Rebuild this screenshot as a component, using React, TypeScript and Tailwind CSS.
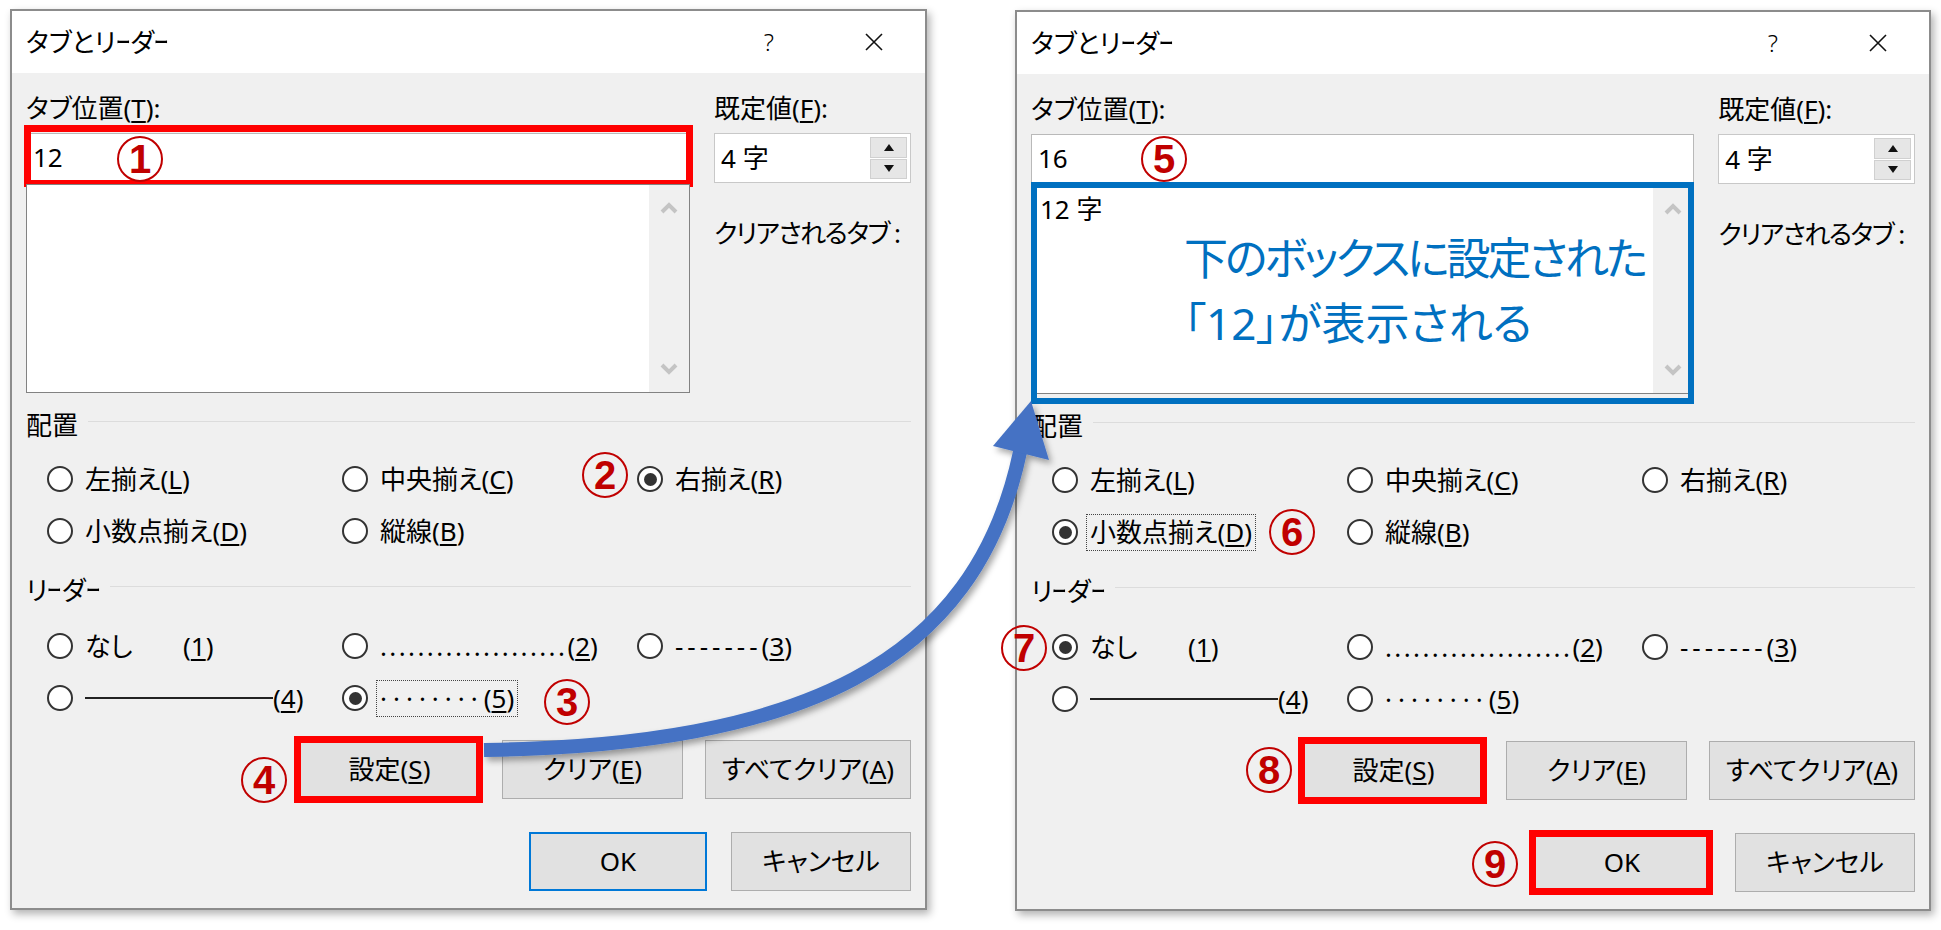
import type { ReactNode } from 'react';

type Variant = 'before' | 'after';

const FONT = { fontFamily: '"Noto Sans","Noto Sans CJK JP",sans-serif', fontFeatureSettings: '"palt"' };

function U({ children }: { children: ReactNode }) {
  return <span className="underline decoration-[1.5px] underline-offset-[3px]">{children}</span>;
}

// 長音記号を細く見せる
function Bar() {
  return <span className="-mr-[11px] inline-block origin-left scale-x-[0.56]">ー</span>;
}

function Radio({ checked }: { checked?: boolean }) {
  return (
    <span className="flex h-[26px] w-[26px] shrink-0 items-center justify-center rounded-full border-2 border-[#333] bg-white">
      {checked && <span className="h-[13px] w-[13px] rounded-full bg-[#333]" />}
    </span>
  );
}

function Option({ checked, focus, children }: { checked?: boolean; focus?: boolean; children: ReactNode }) {
  return (
    <div className="flex h-[52px] items-center gap-[12px]">
      <Radio checked={checked} />
      <span
        className={
          focus
            ? '-ml-[4px] flex h-[37px] items-center whitespace-nowrap border border-dotted border-[#444] px-[3px]'
            : 'flex items-center whitespace-nowrap'
        }
      >
        {children}
      </span>
    </div>
  );
}

function Num({ n, className }: { n: string; className: string }) {
  return (
    <span
      className={`absolute flex h-[46px] w-[46px] items-center justify-center rounded-full border-2 border-[#c00000] text-[40px] leading-none font-bold text-[#c00000] ${className}`}
      style={{ fontFamily: '"Liberation Sans",Arial,sans-serif' }}
    >
      {n}
    </span>
  );
}

function GroupTitle({ children }: { children: ReactNode }) {
  return (
    <div className="flex h-[30px] items-center gap-[10px]">
      <span className="whitespace-nowrap leading-[30px]">{children}</span>
      <span className="-mt-[8px] h-px flex-1 bg-[#dcdcdc]" />
    </div>
  );
}

function Btn({ children, className, primary }: { children: ReactNode; className: string; primary?: boolean }) {
  return (
    <div
      className={`relative flex h-[59px] items-center justify-center bg-[#e1e1e1] ${
        primary ? 'border-2 border-[#0078d7]' : 'border border-[#adadad]'
      } ${className}`}
    >
      {children}
    </div>
  );
}

function RedBox() {
  return <span className="pointer-events-none absolute -top-[5px] -bottom-[5px] -left-[6px] -right-[4px] border-[7px] border-[#ff0000]" />;
}

function Chevron({ up }: { up?: boolean }) {
  return (
    <svg width="20" height="14" viewBox="0 0 20 14">
      <polyline
        points={up ? '3,11 10,4 17,11' : '3,3 10,10 17,3'}
        fill="none"
        stroke="#c4c4c4"
        strokeWidth="4"
      />
    </svg>
  );
}

function Dialog({ variant }: { variant: Variant }) {
  const before = variant === 'before';
  return (
    <div
      className={`relative h-[901px] shrink-0 border-2 border-[#8c8c8c] bg-[#f0f0f0] text-[26px] text-black shadow-[3px_4px_8px_rgba(0,0,0,0.3)] ${
        before ? 'w-[917px]' : 'mt-[1px] w-[916px]'
      }`}
      style={FONT}
    >
      {/* タイトルバー */}
      <div className="flex h-[62px] items-center bg-white pl-[14px]">
        <span className="whitespace-nowrap">
          タブとリ<Bar />ダ<Bar />
        </span>
        <span className="ml-auto mr-[90px] text-[24px] font-light">?</span>
        <svg width="20" height="20" viewBox="0 0 20 20" className="mr-[41px]">
          <path d="M2 2 L18 18 M18 2 L2 18" stroke="#111" strokeWidth="1.6" />
        </svg>
      </div>

      <div className="px-[14px]">
        {/* 上段 */}
        <div className="flex gap-[24px]">
          <div className="w-[664px]">
            <div className="mt-[20px] h-[30px] leading-[30px]">
              タブ位置(<U>T</U>):
            </div>
            <div className="relative mt-[10px] flex h-[49px] items-center border border-[#b9b9b9] bg-white pl-[6px]">
              {before ? '12' : '16'}
              {before && (
                <span className="pointer-events-none absolute -top-[9px] -bottom-[6px] -left-[3px] -right-[4px] border-[7px] border-[#ff0000]" />
              )}
            </div>
            <div className="relative mt-[2px] flex h-[209px] border border-[#828282] bg-white">
              <div className="flex-1 pl-[8px] pt-[6px] leading-[34px]">{before ? '' : '12 字'}</div>
              <div className="flex w-[40px] flex-col items-center justify-between bg-[#f0f0f0] py-[16px]">
                <Chevron up />
                <Chevron />
              </div>
              {!before && (
                <>
                  <span className="pointer-events-none absolute -top-[4px] -bottom-[11px] -left-[1px] -right-[1px] border-[6px] border-[#0070c0]" />
                  <div className="absolute left-[152px] top-[40px] whitespace-nowrap text-[44px] leading-[65px] text-[#0070c0]">
                    <div className="tracking-[-3px]">下のボックスに設定された</div>
                    <div>「12」が表示される</div>
                  </div>
                </>
              )}
            </div>
          </div>
          <div className="w-[197px]">
            <div className="mt-[20px] h-[30px] leading-[30px]">
              既定値(<U>F</U>):
            </div>
            <div className="mt-[10px] flex h-[50px] items-center border border-[#c8c8c8] bg-white pl-[6px] pr-[3px]">
              <span className="flex-1">4 字</span>
              <div className="flex h-[42px] w-[37px] flex-col gap-[1px]">
                <span className="flex flex-1 items-center justify-center border border-[#d0d0d0] bg-[#e6e6e6]">
                  <svg width="10" height="7" viewBox="0 0 10 7">
                    <path d="M0 7 L5 0 L10 7 Z" fill="#111" />
                  </svg>
                </span>
                <span className="flex flex-1 items-center justify-center border border-[#d0d0d0] bg-[#e6e6e6]">
                  <svg width="10" height="7" viewBox="0 0 10 7">
                    <path d="M0 0 L5 7 L10 0 Z" fill="#111" />
                  </svg>
                </span>
              </div>
            </div>
            <div className="mt-[35px] h-[30px] whitespace-nowrap leading-[30px] tracking-[-1.5px]">クリアされるタブ :</div>
          </div>
        </div>

        {/* 配置 */}
        <div className="mt-[17px]">
          <GroupTitle>配置</GroupTitle>
        </div>
        <div className="mt-[13px] grid grid-cols-[295px_295px_295px] pl-[21px]">
          <Option>
            左揃え(<U>L</U>)
          </Option>
          <Option>
            中央揃え(<U>C</U>)
          </Option>
          <Option checked={before}>
            右揃え(<U>R</U>)
          </Option>
          <Option checked={!before} focus={!before}>
            小数点揃え(<U>D</U>)
          </Option>
          <Option>
            縦線(<U>B</U>)
          </Option>
        </div>

        {/* リーダー */}
        <div className="mt-[18px]">
          <GroupTitle>
            リ<Bar />ダ<Bar />
          </GroupTitle>
        </div>
        <div className="mt-[15px] grid grid-cols-[295px_295px_295px] pl-[21px]">
          <Option checked={!before}>
            <span className="inline-block w-[98px]">なし</span>(<U>1</U>)
          </Option>
          <Option>
            <span className="tracking-[2.4px]">....................</span>(<U>2</U>)
          </Option>
          <Option>
            <span className="tracking-[4px]">-------</span>(<U>3</U>)
          </Option>
          <Option>
            <span className="inline-block w-[188px] border-b-2 border-[#222] align-[-6px]" />(<U>4</U>)
          </Option>
          <Option checked={before} focus={before}>
            <span className="tracking-[6px]">········</span>(<U>5</U>)
          </Option>
        </div>

        {/* ボタン */}
        <div className="mt-[16px] flex justify-end gap-[22px]">
          <Btn className="w-[181px]">
            設定(<U>S</U>)
            <RedBox />
          </Btn>
          <Btn className="w-[181px]">
            クリア(<U>E</U>)
          </Btn>
          <Btn className="w-[206px]">
            すべてクリア(<U>A</U>)
          </Btn>
        </div>
        <div className="mt-[33px] flex justify-end gap-[24px]">
          <Btn className="w-[178px]" primary>
            OK
            {!before && <RedBox />}
          </Btn>
          <Btn className="w-[180px]">キャンセル</Btn>
        </div>
      </div>

      {/* 番号 */}
      {before ? (
        <>
          <Num n="1" className="left-[105px] top-[125px]" />
          <Num n="2" className="left-[570px] top-[441px]" />
          <Num n="3" className="left-[532px] top-[668px]" />
          <Num n="4" className="left-[229px] top-[746px]" />
        </>
      ) : (
        <>
          <Num n="5" className="left-[124px] top-[124px]" />
          <Num n="6" className="left-[252px] top-[497px]" />
          <Num n="7" className="-left-[16px] top-[613px]" />
          <Num n="8" className="left-[229px] top-[735px]" />
          <Num n="9" className="left-[455px] top-[829px]" />
        </>
      )}
    </div>
  );
}

export default function App() {
  return (
    <div className="relative h-[930px] w-[1941px] overflow-hidden bg-white">
      <div className="flex items-start gap-[88px] pl-[10px] pt-[9px]">
        <Dialog variant="before" />
        <Dialog variant="after" />
      </div>

      {/* 矢印 */}
      <svg className="pointer-events-none absolute left-0 top-0" width="1941" height="930" viewBox="0 0 1941 930">
        <defs>
          <filter id="shadow" x="-10%" y="-10%" width="130%" height="130%">
            <feDropShadow dx="3" dy="4" stdDeviation="3" floodColor="#000" floodOpacity="0.35" />
          </filter>
        </defs>
        <g filter="url(#shadow)">
          <path d="M484 750 C800 745 975 665 1020 452" fill="none" stroke="#4472c4" strokeWidth="14" />
          <polygon points="993,446 1031,401 1049,460" fill="#4472c4" />
        </g>
      </svg>
    </div>
  );
}
